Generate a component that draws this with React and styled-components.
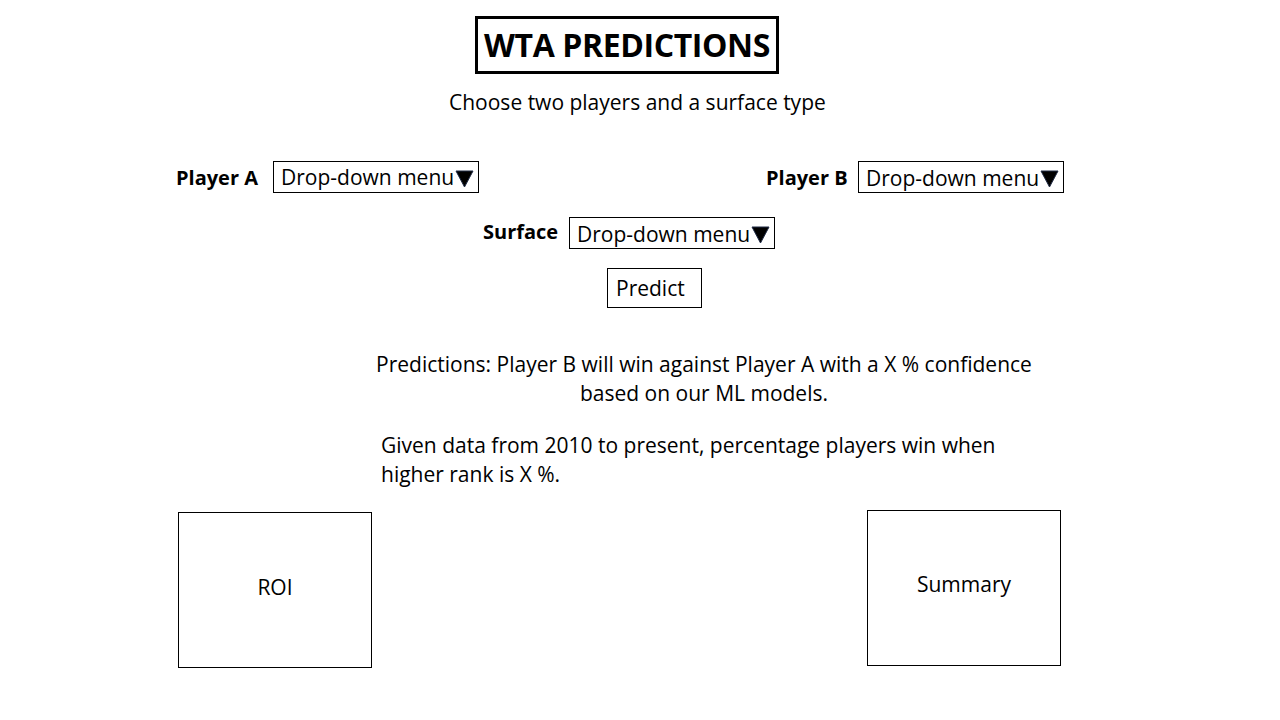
import React from 'react';
import styled, { createGlobalStyle } from 'styled-components';

const GlobalStyle = createGlobalStyle`
  html, body {
    margin: 0;
    padding: 0;
    background: #ffffff;
  }
  body {
    font-family: "Open Sans", Lato, "Liberation Sans", sans-serif;
    color: #000000;
  }
`;

const Caret = () => (
  <svg width="19" height="19" viewBox="0 0 19 19">
    <polygon points="1,2 18,2 9.5,18" fill="#000" stroke="#1f2a44" strokeWidth="1" />
  </svg>
);

const Dropdown = () => (
  <Select>
    <span>Drop-down menu</span>
    <Caret />
  </Select>
);

const App = () => {
  return (
    <>
      <GlobalStyle />
      <Page>
        <TitleRow>
          <Title>WTA PREDICTIONS</Title>
        </TitleRow>
        <Subtitle>Choose two players and a surface type</Subtitle>

        <PlayersRow>
          <Field>
            <Label $width={97} $drop={1}>Player A</Label>
            <Dropdown />
          </Field>
          <Field $shift={1}>
            <Label $width={92} $drop={0}>Player B</Label>
            <Dropdown />
          </Field>
        </PlayersRow>

        <SurfaceRow>
          <Field>
            <Label $width={86} $drop={-2}>Surface</Label>
            <Dropdown />
          </Field>
        </SurfaceRow>

        <ButtonRow>
          <PredictButton>Predict</PredictButton>
        </ButtonRow>

        <Prediction>
          Predictions: Player B will win against Player A with a X % confidence
          <br />
          based on our ML models.
        </Prediction>

        <Stats>
          Given data from 2010 to present, percentage players win when
          <br />
          higher rank is X %.
        </Stats>

        <PanelRow>
          <Panel $offset={2} $lift={6}>ROI</Panel>
          <Panel $offset={0} $lift={8}>Summary</Panel>
        </PanelRow>
      </Page>
    </>
  );
};
export default App;

const Page = styled.div`
  width: 1280px;
  height: 720px;
  display: flex;
  flex-direction: column;
  box-sizing: border-box;
  padding-top: 16px;
  overflow: hidden;
`;
const TitleRow = styled.div`
  display: flex;
  padding-left: 475px;
`;
const Title = styled.h1`
  margin: 0;
  width: 304px;
  height: 58px;
  box-sizing: border-box;
  border: 3px solid #000;
  display: flex;
  align-items: center;
  justify-content: center;
  font-size: 32px;
  font-weight: 700;
  letter-spacing: -0.4px;
  padding-bottom: 2px;
`;
const Subtitle = styled.p`
  margin: 15px 0 0;
  padding-left: 449px;
  width: 374px;
  text-align: center;
  font-size: 21px;
  line-height: 26px;
  white-space: nowrap;
`;
const PlayersRow = styled.div`
  display: flex;
  gap: 287px;
  padding-left: 176px;
  margin-top: 45px;
`;
const SurfaceRow = styled.div`
  display: flex;
  padding-left: 483px;
  margin-top: 24px;
`;
const Field = styled.div`
  display: flex;
  align-items: center;
  margin-top: ${(p) => (p.$shift ? `${p.$shift}px` : '0')};
`;
const Label = styled.span`
  width: ${(p) => p.$width}px;
  flex-shrink: 0;
  font-size: 20px;
  font-weight: 700;
  white-space: nowrap;
  position: relative;
  top: ${(p) => p.$drop}px;
`;
const Select = styled.div`
  width: 206px;
  height: 32px;
  box-sizing: border-box;
  border: 1px solid #000;
  display: flex;
  align-items: center;
  padding: 1px 0 0 7px;
  font-size: 21px;
  white-space: nowrap;
  span {
    margin-right: 1px;
  }
  svg {
    margin-top: 2px;
  }
`;
const ButtonRow = styled.div`
  display: flex;
  padding-left: 607px;
  margin-top: 19px;
`;
const PredictButton = styled.div`
  width: 95px;
  height: 40px;
  box-sizing: border-box;
  border: 1px solid #000;
  display: flex;
  align-items: center;
  padding-left: 8px;
  font-size: 21px;
`;
const Prediction = styled.p`
  margin: 42px 0 0;
  padding-left: 375px;
  width: 658px;
  text-align: center;
  font-size: 21px;
  line-height: 29px;
  white-space: nowrap;
`;
const Stats = styled.p`
  margin: 23px 0 0;
  padding-left: 381px;
  font-size: 21px;
  line-height: 29px;
  white-space: nowrap;
`;
const PanelRow = styled.div`
  display: flex;
  align-items: flex-start;
  gap: 495px;
  padding-left: 178px;
  margin-top: 21px;
`;
const Panel = styled.div`
  width: 194px;
  height: 156px;
  box-sizing: border-box;
  border: 1px solid #000;
  display: flex;
  align-items: center;
  justify-content: center;
  margin-top: ${(p) => p.$offset}px;
  padding-bottom: ${(p) => p.$lift}px;
  font-size: 21px;
`;
